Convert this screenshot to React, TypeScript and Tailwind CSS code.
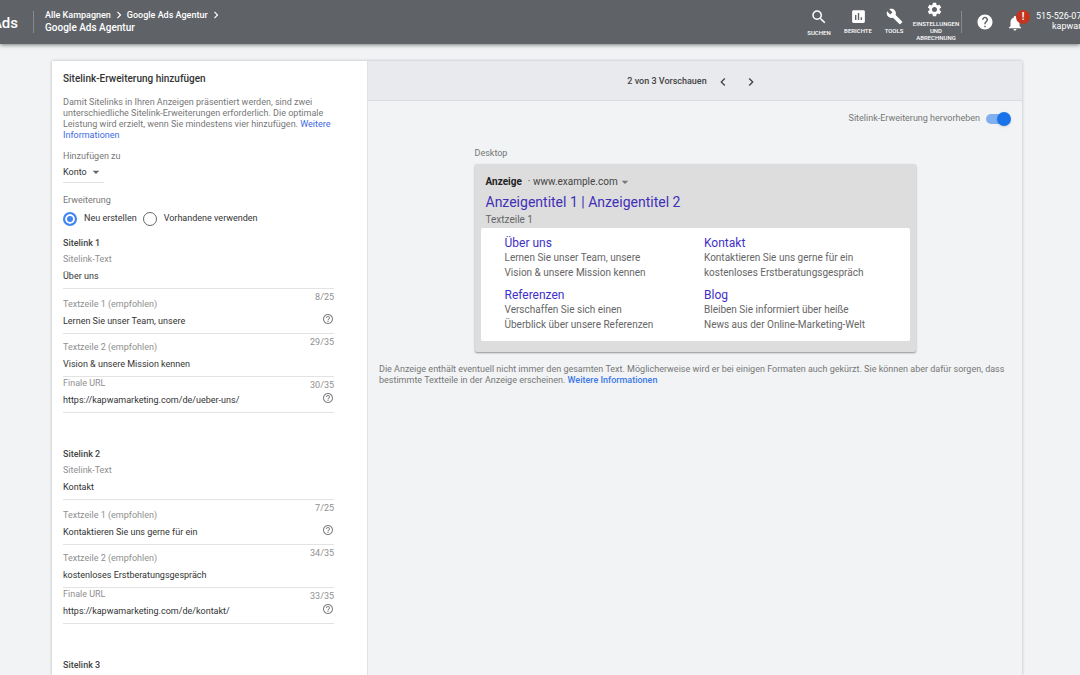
import { useId, useState } from "react";
import type { ReactNode } from "react";
import {
  MdArrowDropDown,
  MdBuild,
  MdChevronLeft,
  MdChevronRight,
  MdHelp,
  MdHelpOutline,
  MdInsertChart,
  MdNotifications,
  MdSearch,
  MdSettings,
} from "react-icons/md";
import { clsx } from "clsx";

interface SitelinkField {
  label: string;
  value: string;
  counter?: string;
  help?: boolean;
  height: string;
}

interface Sitelink {
  title: string;
  fields: SitelinkField[];
}

const sitelinks: Sitelink[] = [
  {
    title: "Sitelink 1",
    fields: [
      { label: "Sitelink-Text", value: "Über uns", height: "h-10" },
      {
        label: "Textzeile 1 (empfohlen)",
        value: "Lernen Sie unser Team, unsere",
        counter: "8/25",
        help: true,
        height: "h-[45px]",
      },
      {
        label: "Textzeile 2 (empfohlen)",
        value: "Vision & unsere Mission kennen",
        counter: "29/35",
        height: "h-[43px]",
      },
      {
        label: "Finale URL",
        value: "https://kapwamarketing.com/de/ueber-uns/",
        counter: "30/35",
        help: true,
        height: "h-9",
      },
    ],
  },
  {
    title: "Sitelink 2",
    fields: [
      { label: "Sitelink-Text", value: "Kontakt", height: "h-10" },
      {
        label: "Textzeile 1 (empfohlen)",
        value: "Kontaktieren Sie uns gerne für ein",
        counter: "7/25",
        help: true,
        height: "h-[45px]",
      },
      {
        label: "Textzeile 2 (empfohlen)",
        value: "kostenloses Erstberatungsgespräch",
        counter: "34/35",
        height: "h-[43px]",
      },
      {
        label: "Finale URL",
        value: "https://kapwamarketing.com/de/kontakt/",
        counter: "33/35",
        help: true,
        height: "h-9",
      },
    ],
  },
  { title: "Sitelink 3", fields: [] },
];

const previewLinks = [
  {
    title: "Über uns",
    lines: ["Lernen Sie unser Team, unsere", "Vision & unsere Mission kennen"],
  },
  {
    title: "Kontakt",
    lines: [
      "Kontaktieren Sie uns gerne für ein",
      "kostenloses Erstberatungsgespräch",
    ],
  },
  {
    title: "Referenzen",
    lines: ["Verschaffen Sie sich einen", "Überblick über unsere Referenzen"],
  },
  {
    title: "Blog",
    lines: [
      "Bleiben Sie informiert über heiße",
      "News aus der Online-Marketing-Welt",
    ],
  },
];

function NavButton({
  icon,
  className,
  children,
}: {
  icon: ReactNode;
  className?: string;
  children: ReactNode;
}) {
  return (
    <button
      type="button"
      className={clsx(
        "flex flex-col items-center text-[6px] leading-[7px] font-medium uppercase",
        className,
      )}
    >
      {icon}
      {children}
    </button>
  );
}

function Header() {
  return (
    <header className="relative flex h-11 items-start overflow-hidden bg-[#5f6368] text-white shadow-[0_1px_4px_rgba(0,0,0,0.5)]">
      <div className="flex h-11 w-[18px] shrink-0 items-center justify-end pt-0.5 text-[15px] font-medium whitespace-nowrap">
        Google Ads
      </div>
      <div className="mt-[11px] ml-[15px] h-[22px] w-px bg-white/25" />
      <nav className="mt-2 ml-[11px] text-[9px] leading-3 font-medium">
        <div className="flex items-center gap-px">
          <a href="#kampagnen">Alle Kampagnen</a>
          <MdChevronRight className="size-3.5" />
          <a href="#agentur">Google Ads Agentur</a>
          <MdChevronRight className="size-3.5" />
        </div>
        <h1 className="text-[10px] leading-3">Google Ads Agentur</h1>
      </nav>

      <div className="ml-auto flex shrink-0 items-start">
        <NavButton
          className="mt-2 w-10"
          icon={<MdSearch className="mb-[3px] size-[18px]" />}
        >
          Suchen
        </NavButton>
        <NavButton
          className="mt-2 w-[38px]"
          icon={<MdInsertChart className="mb-[2px] size-[17px]" />}
        >
          Berichte
        </NavButton>
        <NavButton
          className="mt-2 w-[34px]"
          icon={<MdBuild className="mb-[2px] size-[17px]" />}
        >
          Tools
        </NavButton>
        <NavButton
          className="mt-px w-[50px]"
          icon={<MdSettings className="mr-1 mb-[2px] size-[17px]" />}
        >
          Einstellungen
          <br />
          und
          <br />
          Abrechnung
        </NavButton>
        <div className="mt-[11px] h-[22px] w-px bg-white/25" />
        <button type="button" aria-label="Hilfe" className="mt-[13px] ml-3.5">
          <MdHelp className="size-[18px]" />
        </button>
        <button
          type="button"
          aria-label="Benachrichtigungen"
          className="relative mt-3.5 ml-3"
        >
          <MdNotifications className="size-[18px]" />
          <span className="absolute -top-1 left-2.5 flex size-3.5 items-center justify-center rounded-full bg-[#c5341f] text-[10px] leading-none font-bold">
            !
          </span>
        </button>
        <div className="mt-[11px] ml-3 w-11 overflow-hidden text-[9px] leading-[10px] whitespace-nowrap">
          <div>515-526-07</div>
          <div className="pl-4">kapwar</div>
        </div>
      </div>
    </header>
  );
}

function Field({ label, value, counter, help, height }: SitelinkField) {
  const id = useId();

  return (
    <div
      className={clsx(
        "flex justify-between border-b border-[#e3e3e3] pt-0.5 pb-1.5",
        height,
      )}
    >
      <div className="flex min-w-0 flex-1 flex-col justify-end gap-[5px]">
        <label htmlFor={id} className="leading-3 text-[#8f8f8f]">
          {label}
        </label>
        <input
          id={id}
          defaultValue={value}
          className="h-3 w-full leading-3 text-[#333] outline-none"
        />
      </div>
      <div className="flex flex-col items-end justify-between">
        <span className="leading-3 text-[#8f8f8f]">{counter}</span>
        {help && (
          <button type="button" aria-label={`Hilfe zu ${label}`} className="mb-0.5">
            <MdHelpOutline className="size-3 text-[#808080]" />
          </button>
        )}
      </div>
    </div>
  );
}

function Editor() {
  const [mode, setMode] = useState("neu");

  return (
    <section className="w-[315px] shrink-0 bg-white pt-3 pr-[33px] pl-[11px]">
      <h2 className="text-[10px] leading-3 font-medium text-[#333]">
        Sitelink-Erweiterung hinzufügen
      </h2>
      <p className="mt-3 -mr-1 leading-[11px] text-[#777]">
        Damit Sitelinks in Ihren Anzeigen präsentiert werden, sind zwei
        unterschiedliche Sitelink-Erweiterungen erforderlich. Die optimale
        Leistung wird erzielt, wenn Sie mindestens vier hinzufügen.{" "}
        <a href="#info" className="text-[#4169e1]">
          Weitere Informationen
        </a>
      </p>

      <label htmlFor="ziel" className="mt-[9px] block leading-3 text-[#777]">
        Hinzufügen zu
      </label>
      <div className="relative mt-1 flex w-[41px] items-center border-b border-[#e0e0e0] pb-1">
        <select
          id="ziel"
          className="h-3 w-full appearance-none leading-3 text-[#333] outline-none"
        >
          <option>Konto</option>
        </select>
        <MdArrowDropDown className="pointer-events-none absolute right-0 size-4 text-[#666]" />
      </div>

      <fieldset className="mt-[11px]">
        <legend className="leading-3 text-[#777]">Erweiterung</legend>
        <div className="mt-1.5 flex items-center gap-1.5 text-[#333]">
          {[
            { id: "neu", text: "Neu erstellen" },
            { id: "vorhanden", text: "Vorhandene verwenden" },
          ].map((option) => (
            <label key={option.id} className="flex items-center gap-[7px]">
              <input
                type="radio"
                name="modus"
                checked={mode === option.id}
                onChange={() => setMode(option.id)}
                className="size-3.5 appearance-none rounded-full border border-[#666] checked:border-2 checked:border-[#4285f4] checked:bg-[#4285f4] checked:shadow-[inset_0_0_0_2px_#fff]"
              />
              {option.text}
            </label>
          ))}
        </div>
      </fieldset>

      <div className="mt-[11px] flex flex-col gap-[35px]">
        {sitelinks.map((sitelink) => (
          <div key={sitelink.title}>
            <h3 className="leading-3 font-medium text-[#444]">
              {sitelink.title}
            </h3>
            {sitelink.fields.map((field) => (
              <Field key={field.label} {...field} />
            ))}
          </div>
        ))}
      </div>
    </section>
  );
}

function Preview() {
  return (
    <section className="flex min-w-0 flex-1 flex-col border-l border-[#dfe1e5] bg-[#f1f3f4]">
      <div className="flex h-10 items-center justify-center border-b border-[#dcdde0] bg-[#e8eaed] pt-0.5 pr-1 text-[#444]">
        <span className="font-medium">2 von 3 Vorschauen</span>
        <button type="button" aria-label="Zurück" className="ml-2">
          <MdChevronLeft className="size-4" />
        </button>
        <button type="button" aria-label="Weiter" className="ml-3">
          <MdChevronRight className="size-4" />
        </button>
      </div>

      <label className="mt-2.5 mr-[11px] flex items-center gap-1.5 self-end text-[#777]">
        Sitelink-Erweiterung hervorheben
        <span className="relative flex h-4 w-[25px] items-center">
          <input
            type="checkbox"
            role="switch"
            defaultChecked
            className="peer h-2.5 w-[23px] appearance-none rounded-full bg-[#bbb] checked:bg-[#81aff0]"
          />
          <span className="pointer-events-none absolute left-0 size-3.5 rounded-full bg-white shadow peer-checked:left-[11px] peer-checked:bg-[#1a73e8]" />
        </span>
      </label>

      <div className="mx-auto mt-5 w-[441px]">
        <div className="leading-3 text-[#777]">Desktop</div>
        <div className="mt-[5px] rounded-xs bg-[#ddd] px-1.5 pt-2.5 pb-[11px] shadow-[0_1px_2px_rgba(0,0,0,0.4)]">
          <div className="px-[5px]">
            <div className="flex items-center text-[10px] leading-3 text-[#444]">
              <span className="font-bold text-[#222]">Anzeige</span>
              <span className="ml-1.5">· www.example.com</span>
              <MdArrowDropDown className="-ml-px size-4 text-[#777]" />
            </div>
            <a
              href="#anzeige"
              className="mt-1 block text-[14px] leading-4 text-[#4030b8]"
            >
              Anzeigentitel 1 | Anzeigentitel 2
            </a>
            <div className="mt-1 text-[10px] leading-3 text-[#666]">
              Textzeile 1
            </div>
          </div>
          <div className="mt-0.5 grid grid-cols-2 gap-y-2 rounded-xs bg-white pt-2 pr-1.5 pb-[9px] pl-6">
            {previewLinks.map((link) => (
              <div key={link.title}>
                <a
                  href="#sitelink"
                  className="block text-[12px] leading-[14px] text-[#4030c8]"
                >
                  {link.title}
                </a>
                {link.lines.map((line) => (
                  <div key={line} className="text-[10px] leading-[15px] text-[#666]">
                    {line}
                  </div>
                ))}
              </div>
            ))}
          </div>
        </div>
      </div>

      <p className="mt-3 px-[11px] leading-[11px] text-[#777]">
        Die Anzeige enthält eventuell nicht immer den gesamten Text.
        Möglicherweise wird er bei einigen Formaten auch gekürzt. Sie können aber
        dafür sorgen, dass bestimmte Textteile in der Anzeige erscheinen.{" "}
        <a href="#info" className="font-medium text-[#3b78e7]">
          Weitere Informationen
        </a>
      </p>
    </section>
  );
}

export default function App() {
  return (
    <div className="flex min-h-screen flex-col bg-[#f1f3f4] font-[Roboto,sans-serif] text-[9px]">
      <Header />
      <main className="mt-[17px] mr-[58px] ml-[52px] flex flex-1 shadow-[0_0_3px_rgba(0,0,0,0.25)]">
        <Editor />
        <Preview />
      </main>
    </div>
  );
}
